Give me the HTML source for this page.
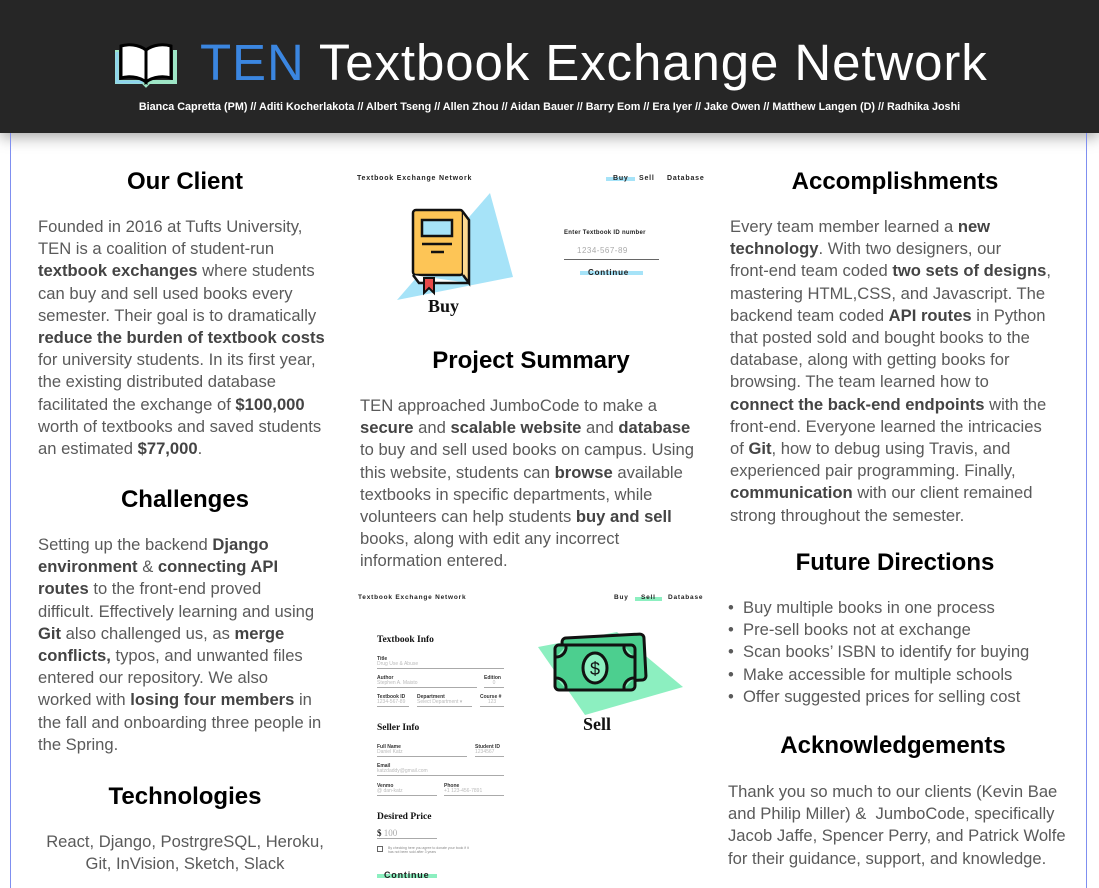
<!DOCTYPE html>
<html><head><meta charset="utf-8"><style>
*{margin:0;padding:0;box-sizing:border-box}
body{width:1099px;height:888px;overflow:hidden;background:#fff;font-family:"Liberation Sans",sans-serif;position:relative}
#hdr{position:absolute;left:0;top:0;width:1099px;height:133px;background:#262626;box-shadow:0 4px 14px rgba(0,0,0,.35)}
#title{position:absolute;left:200px;top:33px;font-size:51px;color:#fff;white-space:nowrap;letter-spacing:0.9px}
#title b{font-weight:normal;color:#3b86e0}
#names{position:absolute;left:0;width:1099px;top:101px;text-align:center;color:#fff;font-size:10.8px;font-weight:bold;white-space:nowrap}
.vl{position:absolute;top:133px;width:1px;height:755px;background:#7f8ff0}
.h{position:absolute;font-weight:bold;font-size:24px;color:#000;text-align:center;white-space:nowrap}
.t{position:absolute;font-size:16.6px;line-height:22.2px;color:#5a5a5a;white-space:nowrap}
.t b{color:#444}
.small{font-size:7px;font-weight:bold;letter-spacing:.8px;color:#222;position:absolute;white-space:nowrap}
.lbl{position:absolute;font-size:5px;font-weight:bold;color:#333}
.fld{position:absolute;border-bottom:1px solid #aaa;font-size:5px;color:#bbb;height:8px}
.serif{font-family:"Liberation Serif",serif;font-weight:bold;position:absolute;color:#111}
</style></head><body>
<div id="hdr">
<svg style="position:absolute;left:113px;top:42px" width="66" height="46" viewBox="0 0 66 46">
<path d="M4 8 V40 H30 L33 43 L36 40 H62 V8" fill="none" stroke="#9ee6c6" stroke-width="4"/>
<path d="M4 10 V40 H30" fill="none" stroke="#8fd3ef" stroke-width="3"/>
<path d="M33 8 C25 2 15 2 8 4 V36 C15 34 25 34 33 40 Z" fill="#fff" stroke="#000" stroke-width="3"/>
<path d="M33 8 C41 2 51 2 58 4 V36 C51 34 41 34 33 40 Z" fill="#fff" stroke="#000" stroke-width="3"/>
</svg>
<div id="title"><b>TEN</b> Textbook Exchange Network</div>
<div id="names">Bianca Capretta (PM) // Aditi Kocherlakota // Albert Tseng // Allen Zhou // Aidan Bauer // Barry Eom // Era Iyer // Jake Owen // Matthew Langen (D) // Radhika Joshi</div>
</div>
<div class="vl" style="left:10px"></div>
<div class="vl" style="left:1086px"></div>

<div class="h" style="left:35px;width:300px;top:168px">Our Client</div>
<div class="t" style="left:38px;top:216px">Founded in 2016 at Tufts University,<br>TEN is a coalition of student-run<br><b>textbook exchanges</b> where students<br>can buy and sell used books every<br>semester. Their goal is to dramatically<br><b>reduce the burden of textbook costs</b><br>for university students. In its first year,<br>the existing distributed database<br>facilitated the exchange of <b>$100,000</b><br>worth of textbooks and saved students<br>an estimated <b>$77,000</b>.</div>
<div class="h" style="left:35px;width:300px;top:486px">Challenges</div>
<div class="t" style="left:38px;top:534px">Setting up the backend <b>Django</b><br><b>environment</b> &amp; <b>connecting API</b><br><b>routes</b> to the front-end proved<br>difficult. Effectively learning and using<br><b>Git</b> also challenged us, as <b>merge</b><br><b>conflicts,</b> typos, and unwanted files<br>entered our repository. We also<br>worked with <b>losing four members</b> in<br>the fall and onboarding three people in<br>the Spring.</div>
<div class="h" style="left:35px;width:300px;top:783px">Technologies</div>
<div class="t" style="left:35px;width:300px;text-align:center;top:831px">React, Django, PostrgreSQL, Heroku,<br>Git, InVision, Sketch, Slack</div>

<!-- Buy mockup -->
<div class="small" style="left:357px;top:175px">Textbook Exchange Network</div>
<div style="position:absolute;left:606px;top:177px;width:29px;height:4px;background:#a6e3f8"></div>
<div class="small" style="left:613px;top:175px">Buy</div>
<div class="small" style="left:639px;top:175px">Sell</div>
<div class="small" style="left:667px;top:175px">Database</div>
<svg style="position:absolute;left:390px;top:185px" width="130" height="120" viewBox="390 185 130 120">
<polygon points="397,300 490,193 513,277" fill="#a6e3f8"/>
<g transform="translate(396,180)">
<rect x="17" y="30" width="50" height="65" rx="3" fill="#fdc556" stroke="#111" stroke-width="2.5"/>
<path d="M67 32 L73 40 V103 L67 95" fill="#fcd991" stroke="#111" stroke-width="2.5"/>
<path d="M17 95 L23 103 H73" fill="#fff" stroke="#111" stroke-width="2.5"/>
<rect x="26" y="40" width="30" height="16" fill="#a6e3f8" stroke="#111" stroke-width="2.5"/>
<line x1="26" y1="64" x2="56" y2="64" stroke="#111" stroke-width="2.5"/>
<line x1="35" y1="72" x2="48" y2="72" stroke="#111" stroke-width="2.5"/>
<path d="M28 98 V113 L33 108 L38 113 V98 Z" fill="#e84a4a" stroke="#111" stroke-width="2"/>
</g>
</svg>
<div class="serif" style="left:428px;top:296px;font-size:18px">Buy</div>
<div class="small" style="left:564px;top:230px;font-size:6px;letter-spacing:.3px">Enter Textbook ID number</div>
<div style="position:absolute;left:577px;top:246px;font-size:8px;color:#aaa;letter-spacing:.5px">1234-567-89</div>
<div style="position:absolute;left:564px;top:259px;width:95px;height:1px;background:#666"></div>
<div style="position:absolute;left:580px;top:271px;width:63px;height:4px;background:#a6e3f8"></div>
<div class="small" style="left:588px;top:268px;font-size:8px">Continue</div>

<div class="h" style="left:380px;width:302px;top:347px">Project Summary</div>
<div class="t" style="left:360px;top:395px">TEN approached JumboCode to make a<br><b>secure</b> and <b>scalable website</b> and <b>database</b><br>to buy and sell used books on campus. Using<br>this website, students can <b>browse</b> available<br>textbooks in specific departments, while<br>volunteers can help students <b>buy and sell</b><br>books, along with edit any incorrect<br>information entered.</div>

<!-- Sell mockup -->
<div class="small" style="left:358px;top:594px;font-size:6.5px">Textbook Exchange Network</div>
<div class="small" style="left:614px;top:594px;font-size:6.5px">Buy</div>
<div style="position:absolute;left:635px;top:597px;width:27px;height:4px;background:#8cefc0"></div>
<div class="small" style="left:641px;top:594px;font-size:6.5px">Sell</div>
<div class="small" style="left:668px;top:594px;font-size:6.5px">Database</div>
<div class="serif" style="left:377px;top:635px;font-size:9.5px">Textbook Info</div>
<div class="lbl" style="left:377px;top:656px">Title</div><div class="fld" style="left:377px;top:661px;width:127px">Drug Use &amp; Abuse</div>
<div class="lbl" style="left:377px;top:675px">Author</div><div class="fld" style="left:377px;top:680px;width:100px">Stephen A. Maisto</div>
<div class="lbl" style="left:484px;top:675px">Edition</div><div class="fld" style="left:484px;top:680px;width:20px;text-align:center">0</div>
<div class="lbl" style="left:377px;top:694px">Textbook ID</div><div class="fld" style="left:377px;top:699px;width:32px">1234-567-89</div>
<div class="lbl" style="left:417px;top:694px">Department</div><div class="fld" style="left:417px;top:699px;width:55px">Select Department ▾</div>
<div class="lbl" style="left:480px;top:694px">Course #</div><div class="fld" style="left:480px;top:699px;width:24px;text-align:center">123</div>
<div class="serif" style="left:377px;top:723px;font-size:9.5px">Seller Info</div>
<div class="lbl" style="left:377px;top:744px">Full Name</div><div class="fld" style="left:377px;top:749px;width:90px">Daniel Katz</div>
<div class="lbl" style="left:475px;top:744px">Student ID</div><div class="fld" style="left:475px;top:749px;width:29px">1234567</div>
<div class="lbl" style="left:377px;top:763px">Email</div><div class="fld" style="left:377px;top:768px;width:127px">katzdaddy@gmail.com</div>
<div class="lbl" style="left:377px;top:783px">Venmo</div><div class="fld" style="left:377px;top:788px;width:60px">@ dan-katz</div>
<div class="lbl" style="left:444px;top:783px">Phone</div><div class="fld" style="left:444px;top:788px;width:60px">+1 123-456-7891</div>
<div class="serif" style="left:377px;top:812px;font-size:9.5px">Desired Price</div>
<div class="fld" style="left:377px;top:828px;width:60px;height:11px;font-size:9px;color:#aaa;font-family:'Liberation Serif',serif"><b style="color:#222">$</b> 100</div>
<div style="position:absolute;left:377px;top:846px;width:6px;height:6px;border:1px solid #666"></div>
<div style="position:absolute;left:388px;top:846px;font-size:3.5px;color:#888;line-height:4px">By checking here you agree to donate your book if it<br>has not been sold after 3 years</div>
<div style="position:absolute;left:377px;top:874px;width:60px;height:4px;background:#8cefc0"></div>
<div class="small" style="left:384px;top:870px;font-size:9px">Continue</div>
<svg style="position:absolute;left:530px;top:625px" width="160" height="100" viewBox="530 625 160 100">
<polygon points="538,647 617,632 683,687 585,715" fill="#8cefc0"/>
<rect x="563" y="636" width="82" height="46" rx="4" fill="#4ccf8f" stroke="#111" stroke-width="3" transform="rotate(-3 604 659)"/>
<rect x="555" y="645" width="80" height="45" rx="4" fill="#4ccf8f" stroke="#111" stroke-width="3"/>
<path d="M556 657 a10 10 0 0 0 10 -11 M634 657 a10 10 0 0 1 -10 -11 M556 678 a10 10 0 0 1 10 11 M634 678 a10 10 0 0 0 -10 11" fill="#8cefc0" stroke="#111" stroke-width="3"/>
<ellipse cx="595" cy="668" rx="12" ry="15" fill="#8cefc0" stroke="#111" stroke-width="3"/>
<text x="595" y="675" text-anchor="middle" font-size="18" font-family="Liberation Sans" fill="#111">$</text>
</svg>
<div class="serif" style="left:583px;top:714px;font-size:18px">Sell</div>

<div class="h" style="left:745px;width:300px;top:168px">Accomplishments</div>
<div class="t" style="left:730px;top:216px">Every team member learned a <b>new</b><br><b>technology</b>. With two designers, our<br>front-end team coded <b>two sets of designs</b>,<br>mastering HTML,CSS, and Javascript. The<br>backend team coded <b>API routes</b> in Python<br>that posted sold and bought books to the<br>database, along with getting books for<br>browsing. The team learned how to<br><b>connect the back-end endpoints</b> with the<br>front-end. Everyone learned the intricacies<br>of <b>Git</b>, how to debug using Travis, and<br>experienced pair programming. Finally,<br><b>communication</b> with our client remained<br>strong throughout the semester.</div>
<div class="h" style="left:745px;width:300px;top:549px">Future Directions</div>
<div class="t" style="left:728px;top:597px">• &nbsp;Buy multiple books in one process<br>• &nbsp;Pre-sell books not at exchange<br>• &nbsp;Scan books’ ISBN to identify for buying<br>• &nbsp;Make accessible for multiple schools<br>• &nbsp;Offer suggested prices for selling cost</div>
<div class="h" style="left:743px;width:300px;top:732px">Acknowledgements</div>
<div class="t" style="left:728px;top:781px">Thank you so much to our clients (Kevin Bae<br>and Philip Miller) &amp;&nbsp; JumboCode, specifically<br>Jacob Jaffe, Spencer Perry, and Patrick Wolfe<br>for their guidance, support, and knowledge.</div>
</body></html>
